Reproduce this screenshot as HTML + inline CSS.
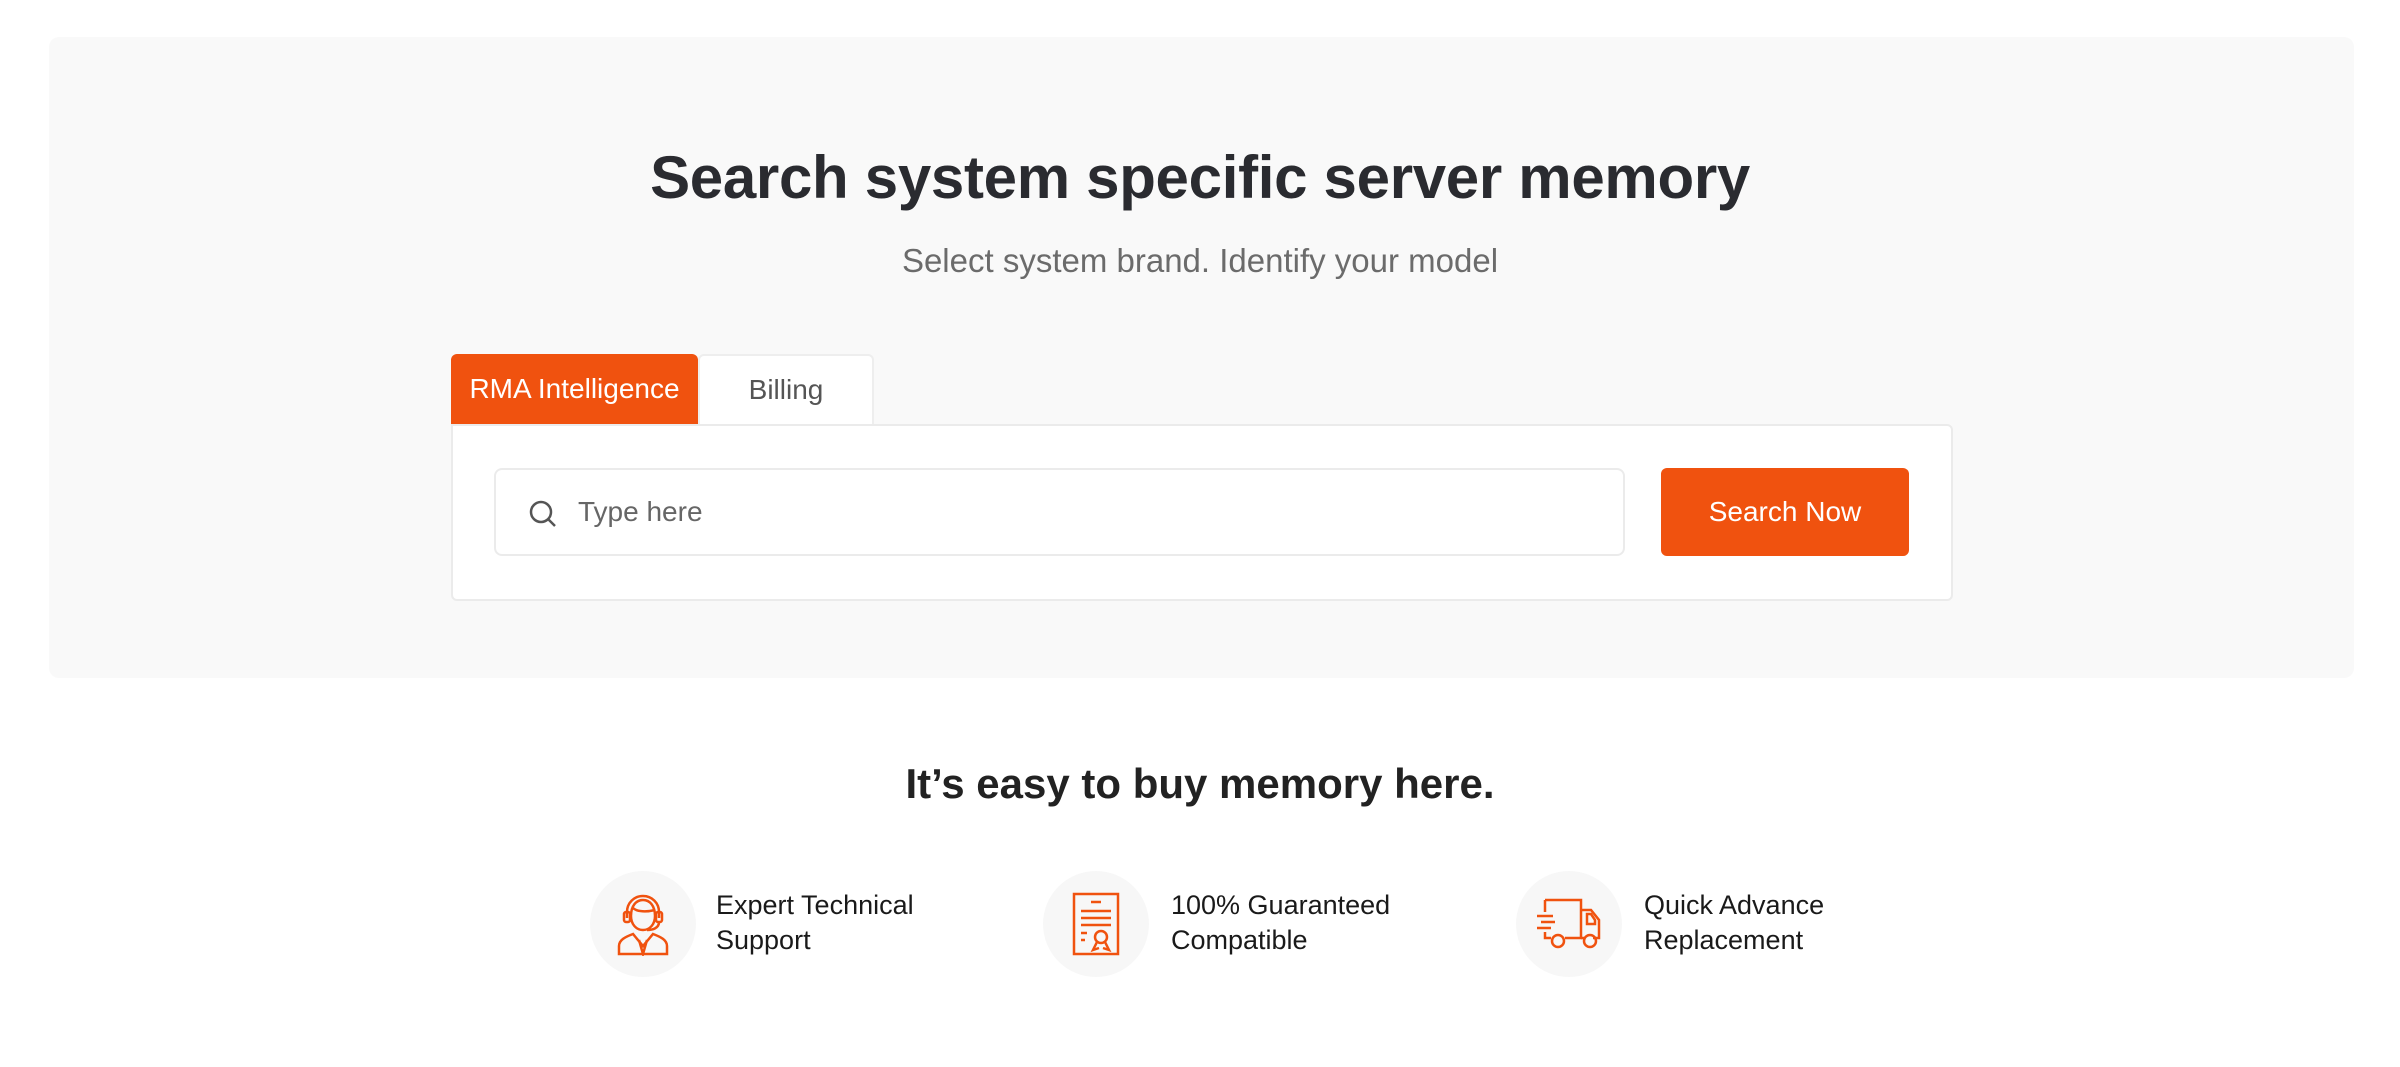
<!DOCTYPE html>
<html><head><meta charset="utf-8"><style>
*{margin:0;padding:0;box-sizing:border-box}
body{width:2400px;height:1067px;background:#fff;font-family:"Liberation Sans",sans-serif;position:relative;overflow:hidden}
.panel{position:absolute;left:49px;top:37px;width:2305px;height:641px;background:#f9f9f9;border-radius:10px}
.t{position:absolute;left:0;width:2400px;text-align:center}
h1{font-size:60px;font-weight:700;color:#2a2b30;top:143px;letter-spacing:-0.3px}
.sub{font-size:33px;color:#6b6b6b;top:242px}
.tab{position:absolute;top:354px;height:70px;font-size:28px;display:flex;align-items:center;justify-content:center;border-radius:6px 6px 0 0}
.t1{left:451px;width:247px;background:#f0520f;color:#fff}
.t2{left:698px;width:176px;background:#fff;color:#555;border:2px solid #eee;border-bottom:none}
.card{position:absolute;left:451px;top:424px;width:1502px;height:177px;background:#fff;border:2px solid #ebebeb;border-radius:0 6px 6px 6px}
.inp{position:absolute;left:494px;top:468px;width:1131px;height:88px;border:2px solid #ebebeb;border-radius:8px;background:#fff}
.inp span{position:absolute;left:82px;top:26px;font-size:28px;color:#666}
.btn{position:absolute;left:1661px;top:468px;width:248px;height:88px;background:#f0520f;border-radius:6px;color:#fff;font-size:28px;display:flex;align-items:center;justify-content:center}
h2{font-size:42px;font-weight:700;color:#222;top:760px}
.c{position:absolute;width:106px;height:106px;border-radius:50%;background:#f7f7f7;top:871px;display:flex;align-items:center;justify-content:center}
.f{position:absolute;top:888px;font-size:27px;line-height:35px;color:#1a1a1a}
</style></head><body>
<div class="panel"></div>
<h1 class="t">Search system specific server memory</h1>
<div class="t sub">Select system brand. Identify your model</div>
<div class="tab t1">RMA Intelligence</div>
<div class="tab t2">Billing</div>
<div class="card"></div>
<div class="inp"><svg style="position:absolute;left:32px;top:29px" width="30" height="30" viewBox="0 0 30 30" fill="none" stroke="#555" stroke-width="2.5"><circle cx="13" cy="13" r="10"/><path d="M20 20l7 7"/></svg><span>Type here</span></div>
<div class="btn">Search Now</div>
<h2 class="t">It’s easy to buy memory here.</h2>

<div class="c" style="left:590px"><svg width="60" height="64" viewBox="0 0 60 64" fill="none" stroke="#f0520f" stroke-width="2.5"><path d="M18 24c0-10 5-16 12-16s12 6 12 16c0 8-5 14-12 14s-12-6-12-14z"/><path d="M14 26v-6c0-9 7-16 16-16s16 7 16 16v6"/><rect x="11" y="20" width="6" height="10" rx="2"/><rect x="43" y="20" width="6" height="10" rx="2"/><path d="M46 30c0 6-6 8-12 8"/><path d="M6 62v-8c0-6 6-9 14-12l10 12 10-12c8 3 14 6 14 12v8z"/><path d="M26 48l4 14 4-14"/><path d="M20 16c4 4 14 4 22 2"/></svg></div>
<div class="f" style="left:716px">Expert Technical<br>Support</div>

<div class="c" style="left:1043px"><svg width="50" height="66" viewBox="0 0 50 66" fill="none" stroke="#f0520f" stroke-width="2.5"><rect x="3" y="3" width="44" height="60"/><path d="M20 11h10M10 20h30M10 27h30M10 34h30M10 42h6M10 49h4"/><circle cx="30" cy="46" r="6"/><path d="M26 51l-4 8 6-2M34 51l4 8-6-2"/></svg></div>
<div class="f" style="left:1171px">100% Guaranteed<br>Compatible</div>

<div class="c" style="left:1516px"><svg width="68" height="56" viewBox="0 0 68 56" fill="none" stroke="#f0520f" stroke-width="2.5"><path d="M10 4h36v38H30M10 4v12M10 36v6h6"/><path d="M46 14h10l8 10v18h-6M46 42h4"/><path d="M52 18h4l4 6v4h-8z"/><circle cx="23" cy="45" r="6"/><circle cx="55" cy="45" r="6"/><path d="M2 20h16M6 26h14M2 32h14"/></svg></div>
<div class="f" style="left:1644px">Quick Advance<br>Replacement</div>
</body></html>
